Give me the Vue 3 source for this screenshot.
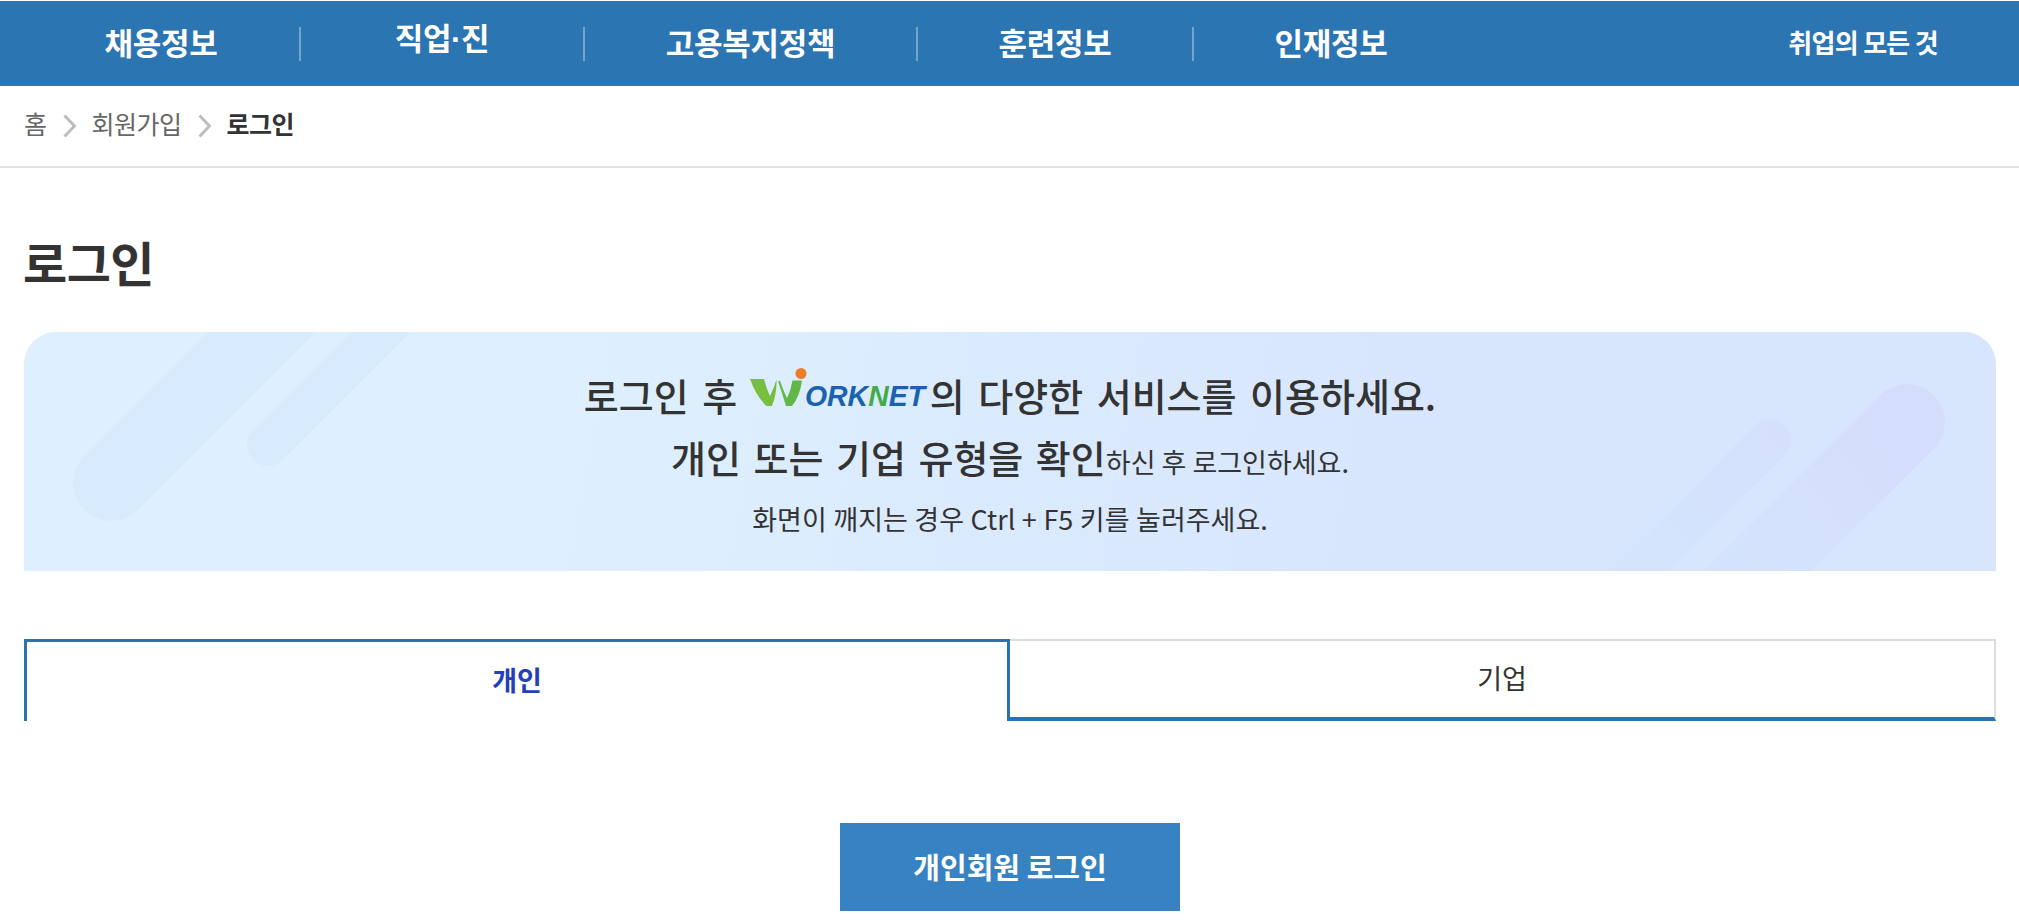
<template>
  <div class="page">
    <nav class="gnb">
      <ul class="gnb-list">
        <li v-for="(item, i) in menus" :key="item" class="gnb-item" :class="{ raised: i === 1 }">
          <a href="#">{{ item }}</a>
        </li>
      </ul>
      <a href="#" class="gnb-all">취업의 모든 것</a>
    </nav>

    <div class="breadcrumb">
      <span>홈</span>
      <svg class="crumb-arrow" width="13" height="24" viewBox="0 0 13 24">
        <path d="M1.5 1.5 L11.5 12 L1.5 22.5" />
      </svg>
      <span>회원가입</span>
      <svg class="crumb-arrow" width="13" height="24" viewBox="0 0 13 24">
        <path d="M1.5 1.5 L11.5 12 L1.5 22.5" />
      </svg>
      <strong>로그인</strong>
    </div>

    <main class="content">
      <h1 class="title">로그인</h1>

      <section class="banner">
        <svg class="banner-deco" width="1972" height="239" viewBox="0 0 1972 239">
          <defs>
            <linearGradient id="decoRight" gradientUnits="userSpaceOnUse" x1="1883" y1="60" x2="1650" y2="239">
              <stop offset="0" stop-color="#d5ddfc" />
              <stop offset="1" stop-color="#d4e4fd" />
            </linearGradient>
          </defs>
          <g fill="none" stroke-linecap="round" stroke="#d8ebfc">
            <path d="M87 151 L287 -49" stroke-width="76" />
            <path d="M244 113 L404 -47" stroke-width="42" />
          </g>
          <g fill="none" stroke-linecap="round" stroke="url(#decoRight)">
            <path d="M1883 90 L1603 370" stroke-width="76" />
            <path d="M1746 108 L1502 352" stroke-width="42" />
          </g>
        </svg>

        <p class="line-main first">
          로그인 후
          <svg class="logo" width="181" height="40" viewBox="0 0 181 40" role="img" aria-label="WORKNET">
            <circle cx="52" cy="5.5" r="5.5" fill="#ee7d2b" />
            <path d="M1 11 L15 11 Q18 22 21 28 Q25 20 27.5 11.5 Q28 26 23 38 L17.5 38 Q7 28 1 11 Z" fill="#79bf3f" />
            <path d="M29 13 L31 13 Q35 24 38 30 Q42 22 43.5 12.5 L53 12.5 Q51 28 43 38 L37 38 Q33 25 29 13 Z" fill="#62b846" />
            <text x="56" y="38" class="logo-text" textLength="120" lengthAdjust="spacingAndGlyphs">ORK<tspan fill="#3fae49">N</tspan>ET</text>
          </svg>의 다양한 서비스를 이용하세요.
        </p>
        <p class="line-main">개인 또는 기업 유형을 확인<span class="line-rest">하신 후 로그인하세요.</span></p>
        <p class="line-sub">화면이 깨지는 경우 Ctrl + F5 키를 눌러주세요.</p>
      </section>

      <div class="tabs">
        <button class="tab active">개인</button>
        <button class="tab">기업</button>
      </div>

      <div class="actions">
        <a href="#" class="login-btn">개인회원 로그인</a>
      </div>
    </main>
  </div>
</template>

<script setup>
const menus = ['채용정보', '직업·진', '고용복지정책', '훈련정보', '인재정보']
</script>

<style>
html,
body {
  margin: 0;
  background: #fff;
}
</style>

<style scoped>
.page {
  font-family: "Noto Sans CJK KR", "Noto Sans", sans-serif;
  color: #333;
}

a {
  color: inherit;
  text-decoration: none;
}

.gnb {
  display: flex;
  align-items: center;
  height: 85px;
  margin-top: 1px;
  padding: 0 81px 0 23px;
  background: #2b75b3;
  color: #fff;
}

.gnb-list {
  display: grid;
  grid-template-columns: 278px 284px 333px 276px 274px;
  margin: 0;
  padding: 0;
  list-style: none;
}

.gnb-item {
  display: flex;
  align-items: center;
  justify-content: center;
  height: 34px;
  font-size: 31px;
  font-weight: 700;
  letter-spacing: -0.3px;
  border-right: 2px solid rgba(255, 255, 255, 0.35);
}

.gnb-item a {
  margin-bottom: 5px;
}

.gnb-item:last-child {
  border-right: 0;
}

.gnb-item.raised a {
  margin-bottom: 15px;
  font-family: "Liberation Sans", "Noto Sans CJK KR", sans-serif;
}

.gnb-all {
  margin-left: auto;
  margin-bottom: 5px;
  font-size: 26px;
  font-weight: 700;
  letter-spacing: -0.7px;
}

.breadcrumb {
  display: flex;
  align-items: center;
  gap: 16px;
  box-sizing: border-box;
  height: 82px;
  padding: 0 24px 7px;
  border-bottom: 2px solid #e2e2e2;
  font-size: 25px;
  color: #666;
  letter-spacing: -0.5px;
}

.breadcrumb strong {
  color: #333;
  font-weight: 700;
}

.crumb-arrow {
  flex: none;
  margin-top: 6px;
}

.crumb-arrow path {
  fill: none;
  stroke: #bdbdbd;
  stroke-width: 3;
}

.content {
  padding: 63px 23px 0 24px;
}

.title {
  margin: 0 0 41px -1px;
  font-size: 48px;
  line-height: 60px;
  font-weight: 700;
  letter-spacing: -0.5px;
}

.banner {
  position: relative;
  box-sizing: border-box;
  height: 239px;
  padding-top: 32px;
  overflow: hidden;
  border-radius: 32px 32px 0 0;
  background: linear-gradient(100deg, #def0ff 25%, #d8e6fd 70%);
  text-align: center;
}

.banner-deco {
  position: absolute;
  left: 0;
  top: 0;
}

.banner p {
  position: relative;
  margin: 0;
}

.line-main {
  font-size: 38px;
  line-height: 62px;
  font-weight: 500;
  word-spacing: 4px;
}

.line-main.first {
  word-spacing: 5px;
}

.logo {
  vertical-align: 3px;
  margin-left: -2px;
}

.logo-text {
  font-family: "Liberation Sans", sans-serif;
  font-size: 30px;
  font-weight: 700;
  font-style: italic;
  word-spacing: 0;
  fill: #1a62ad;
}

.line-rest {
  font-size: 27px;
  font-weight: 400;
  word-spacing: 0;
}

.line-sub {
  font-size: 27px;
  line-height: 52px;
  word-spacing: 0.5px;
}

.tabs {
  display: flex;
  height: 82px;
  margin-top: 68px;
}

.tab {
  flex: none;
  width: 50%;
  box-sizing: border-box;
  padding: 0 0 4px;
  background: #fff;
  border: 2px solid #ddd;
  border-left: 0;
  border-bottom: 4px solid #2a72b0;
  font-family: inherit;
  font-size: 27px;
  color: #333;
}

.tab.active {
  border: 3px solid #2a72b0;
  border-bottom: 0;
  font-weight: 700;
  color: #2340b8;
}

.actions {
  display: flex;
  justify-content: center;
  margin-top: 102px;
}

.login-btn {
  display: flex;
  align-items: center;
  justify-content: center;
  width: 340px;
  height: 88px;
  padding-bottom: 2px;
  box-sizing: border-box;
  background: #3782c3;
  color: #fff;
  font-size: 29px;
  font-weight: 700;
}
</style>
